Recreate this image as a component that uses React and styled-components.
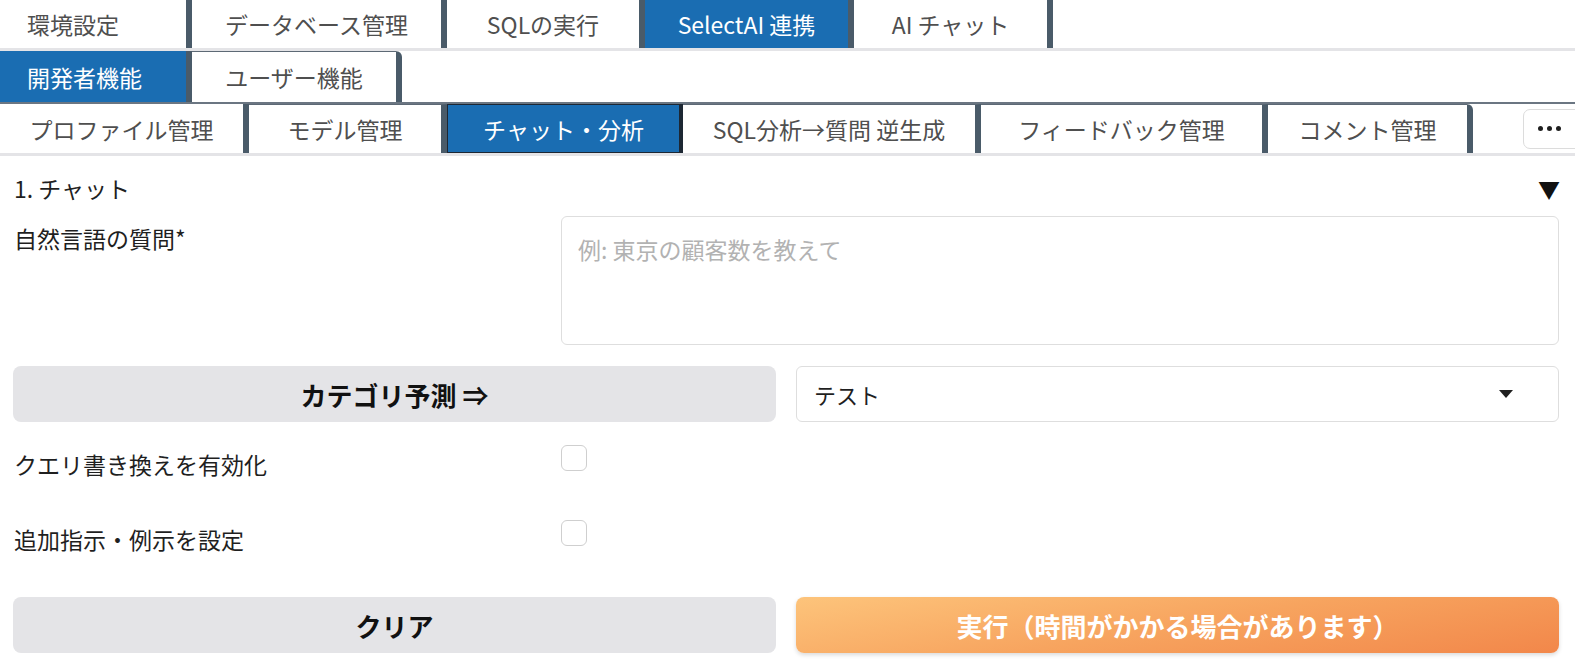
import React from 'react'
import styled, { createGlobalStyle } from 'styled-components'

const GlobalStyle = createGlobalStyle`
  html, body {
    overflow: hidden;
  }
  body {
    margin: 0;
    background: #ffffff;
    font-family: "Noto Sans CJK JP", "Noto Sans", sans-serif;
    color: #1f1f1f;
  }
  * { box-sizing: border-box; }
`

const Page = styled.div`
  width: 100%;
  height: 672px;
  overflow: hidden;
`

const TabBar = styled.div`
  display: flex;
  align-items: stretch;
  height: ${(p) => p.height}px;
  border-bottom: ${(p) => p.line};
  overflow: hidden;
`

const Tab = styled.div`
  flex: none;
  width: ${(p) => p.width}px;
  display: flex;
  align-items: center;
  justify-content: ${(p) => (p.start ? 'flex-start' : 'center')};
  padding-left: ${(p) => (p.start ? 27 : 0)}px;
  font-size: 23px;
  color: ${(p) => (p.active ? '#ffffff' : '#4f4f4f')};
  background: ${(p) => (p.active ? '#1a6db2' : '#ffffff')};
  border-right: 6px solid #4a5b69;
  border-top: ${(p) => (p.topLine ? '1px solid #5d6975' : 'none')};
  border-top-right-radius: ${(p) => (p.last ? '6px' : '0')};
  ${(p) => p.outlined && `
    border: 1px solid #1d2733;
    border-right: 4px solid #1d2733;
  `}
`

const MoreWrap = styled.div`
  flex: 1;
  display: flex;
  align-items: center;
  justify-content: flex-end;
`

const MoreButton = styled.div`
  flex: none;
  width: 72px;
  height: 40px;
  margin-right: -20px;
  border: 1px solid #dcdcdc;
  border-radius: 7px;
  display: flex;
  align-items: center;
  padding-left: 14px;
  gap: 4px;
`

const Dot = styled.span`
  width: 5px;
  height: 5px;
  border-radius: 50%;
  background: #1f1f1f;
`

const Content = styled.div`
  padding: 15px 16px 0 13px;
`

const AccordionHeader = styled.div`
  display: flex;
  justify-content: space-between;
  align-items: center;
  height: 34px;
  font-size: 23px;
  padding-left: 1px;
  margin-bottom: 11px;
`

const Caret = styled.span`
  font-size: 22px;
  color: #111;
  margin-right: -1px;
`

const FieldRow = styled.div`
  display: grid;
  grid-template-columns: 528px 1fr;
  column-gap: 20px;
  height: ${(p) => p.height}px;
  margin-bottom: ${(p) => p.after}px;
`

const Label = styled.div`
  font-size: 23px;
  line-height: 34px;
  padding-top: ${(p) => p.top || 0}px;
  padding-left: 1px;
  color: #1f1f1f;
`

const TextArea = styled.div`
  border: 1px solid #dedede;
  border-radius: 6px;
  padding: 15px 16px;
  font-size: 23px;
  line-height: 34px;
  color: #b2b2b2;
`

const ButtonRow = styled.div`
  display: grid;
  grid-template-columns: 1fr 1fr;
  column-gap: 20px;
  height: 56px;
  margin-bottom: ${(p) => p.after}px;
`

const Button = styled.div`
  border-radius: 8px;
  display: flex;
  align-items: center;
  justify-content: center;
  font-size: 26px;
  font-weight: 700;
  color: ${(p) => (p.primary ? '#ffffff' : '#111111')};
  background: ${(p) =>
    p.primary
      ? 'linear-gradient(170deg, #fdc47b 0%, #f7a45f 50%, #f2874a 100%)'
      : '#e4e4e7'};
  box-shadow: ${(p) => (p.primary ? '0 2px 4px rgba(0,0,0,0.15)' : 'none')};
`

const Select = styled.div`
  border: 1px solid #dedede;
  border-radius: 6px;
  display: flex;
  align-items: center;
  justify-content: space-between;
  padding: 0 45px 0 17px;
  font-size: 22px;
  color: #1f1f1f;
`

const SelectCaret = styled.span`
  width: 0;
  height: 0;
  border-left: 7px solid transparent;
  border-right: 7px solid transparent;
  border-top: 8px solid #1f1f1f;
`

const CheckBox = styled.div`
  width: 26px;
  height: 26px;
  border: 1px solid #cfcfcf;
  border-radius: 6px;
  background: #ffffff;
`

const topTabs = [
  { label: '環境設定', width: 192, start: true },
  { label: 'データベース管理', width: 255 },
  { label: 'SQLの実行', width: 198 },
  { label: 'SelectAI 連携', width: 209, active: true },
  { label: 'AI チャット', width: 199 },
]

const roleTabs = [
  { label: '開発者機能', width: 192, active: true, start: true },
  { label: 'ユーザー機能', width: 210, topLine: true, last: true },
]

const subTabs = [
  { label: 'プロファイル管理', width: 249 },
  { label: 'モデル管理', width: 198, topLine: true },
  { label: 'チャット・分析', width: 236, active: true, outlined: true },
  { label: 'SQL分析→質問 逆生成', width: 298, topLine: true },
  { label: 'フィードバック管理', width: 287, topLine: true },
  { label: 'コメント管理', width: 205, topLine: true, last: true },
]

const App = () => {
  return (
    <Page>
      <GlobalStyle />
      <TabBar height={51} line="3px solid #e4e4e7">
        {topTabs.map((t) => (
          <Tab key={t.label} {...t}>
            {t.label}
          </Tab>
        ))}
      </TabBar>
      <TabBar height={53} line="2px solid #6b7682">
        {roleTabs.map((t) => (
          <Tab key={t.label} {...t}>
            {t.label}
          </Tab>
        ))}
      </TabBar>
      <TabBar height={52} line="3px solid #e4e4e7">
        {subTabs.map((t) => (
          <Tab key={t.label} {...t}>
            {t.label}
          </Tab>
        ))}
        <MoreWrap>
          <MoreButton>
            <Dot />
            <Dot />
            <Dot />
          </MoreButton>
        </MoreWrap>
      </TabBar>

      <Content>
        <AccordionHeader>
          <span>1. チャット</span>
          <Caret>▼</Caret>
        </AccordionHeader>

        <FieldRow height={129} after={21}>
          <Label top={5}>自然言語の質問*</Label>
          <TextArea>例: 東京の顧客数を教えて</TextArea>
        </FieldRow>

        <ButtonRow after={23}>
          <Button>カテゴリ予測 ⇒</Button>
          <Select>
            <span>テスト</span>
            <SelectCaret />
          </Select>
        </ButtonRow>

        <FieldRow height={34} after={41}>
          <Label top={2}>クエリ書き換えを有効化</Label>
          <CheckBox />
        </FieldRow>

        <FieldRow height={34} after={43}>
          <Label top={2}>追加指示・例示を設定</Label>
          <CheckBox />
        </FieldRow>

        <ButtonRow after={0}>
          <Button>クリア</Button>
          <Button primary>実行（時間がかかる場合があります）</Button>
        </ButtonRow>
      </Content>
    </Page>
  )
}

export default App
